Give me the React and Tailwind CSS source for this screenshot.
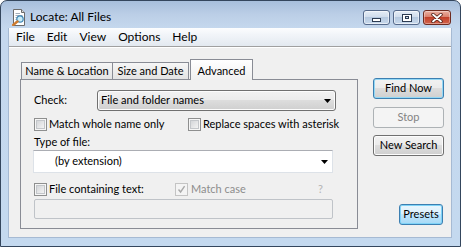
import React from "react";

function Box({ disabled }) {
  if (disabled) {
    return (
      <span className="flex h-[13px] w-[13px] shrink-0 items-center justify-center border border-[#c4c4c4] bg-[#f4f4f4]">
        <svg width="9" height="9" viewBox="0 0 9 9">
          <path d="M1.5 4.5 L3.6 7 L7.6 1.2" fill="none" stroke="#a9a9a9" strokeWidth="1.4" />
        </svg>
      </span>
    );
  }
  return (
    <span className="flex h-[13px] w-[13px] shrink-0 items-center justify-center border border-[#8e8f8f] bg-[#f6f6f6]">
      <span className="h-[9px] w-[9px] border border-[#c3c6ca] bg-[linear-gradient(135deg,#d4d6d9,#f3f3f3)]" />
    </span>
  );
}

function Arrow() {
  return (
    <svg width="7" height="4" viewBox="0 0 7 4">
      <path d="M0 0H7L3.5 4Z" fill="#000" />
    </svg>
  );
}

function WinIcon() {
  return (
    <svg width="16" height="17" viewBox="0 0 16 17">
      <path d="M2.5 0.5H10.5L13.5 3.5V16.5H2.5Z" fill="#fff" stroke="#6b6b6b" />
      <path d="M10.5 0.5V3.5H13.5" fill="#dcdcdc" stroke="#6b6b6b" />
      <path d="M4.5 4.5H9M4.5 6.5H11.5M4.5 8.5H11.5M4.5 10.5H11.5M4.5 12.5H11.5" stroke="#a3adb8" />
      <circle cx="9" cy="10" r="3.2" fill="#c9ecf7" stroke="#3f86b5" strokeWidth="1.2" />
      <path d="M6.6 12.4L2.2 16" stroke="#cf7a2c" strokeWidth="2.4" strokeLinecap="round" />
    </svg>
  );
}

export default function App() {
  return (
    <div className="h-[247px] w-[461px] bg-white font-['Lato','Noto_Sans',sans-serif] text-black">
      <div className="flex h-[247px] w-[461px] flex-col rounded-t-[7px] border border-[#34465d] bg-[linear-gradient(180deg,#a7bfdc_0px,#bccfe7_14px,#c5d8ee_28px,#c4d9ef_100%)] pb-[8px] pl-[7px] pr-[8px]">
        {/* Title bar */}
        <div className="flex h-[27px] items-start">
          <div className="ml-[3px] mt-[8px]">
            <WinIcon />
          </div>
          <span className="ml-[3px] mt-[8px] text-[12px] leading-[16px]">Locate: All Files</span>
          <div className="ml-auto mr-[1px] mt-[9px] flex gap-[3px]">
            <div className="flex h-[15px] w-[27px] items-end justify-center rounded-[3px] border border-[#55698a] bg-[linear-gradient(180deg,#e4ecf6_0%,#cfdcec_50%,#b6c9e0_50%,#c8d9ec_100%)] shadow-[inset_0_0_0_1px_rgba(255,255,255,0.55)]">
              <span className="mb-[2px] h-[4px] w-[9px] border border-[#2c3b52] bg-white" />
            </div>
            <div className="flex h-[15px] w-[27px] items-center justify-center rounded-[3px] border border-[#55698a] bg-[linear-gradient(180deg,#e4ecf6_0%,#cfdcec_50%,#b6c9e0_50%,#c8d9ec_100%)] shadow-[inset_0_0_0_1px_rgba(255,255,255,0.55)]">
              <span className="flex h-[8px] w-[10px] items-center justify-center border border-[#2c3b52] bg-white">
                <span className="h-[3px] w-[4px] border border-[#2c3b52] bg-[#c9d7e8]" />
              </span>
            </div>
            <div className="flex h-[15px] w-[28px] items-center justify-center rounded-[3px] border border-[#6e2b20] bg-[linear-gradient(180deg,#eab0a2_0%,#d97c68_50%,#c2412b_50%,#d3644c_100%)] shadow-[inset_0_0_0_1px_rgba(255,255,255,0.35)]">
              <svg width="12" height="10" viewBox="0 0 12 10">
                <path d="M2 1.5L10 8.5M10 1.5L2 8.5" stroke="#4a1a12" strokeWidth="3.4" strokeLinecap="round" />
                <path d="M2 1.5L10 8.5M10 1.5L2 8.5" stroke="#fff" strokeWidth="1.8" strokeLinecap="round" />
              </svg>
            </div>
          </div>
        </div>

        {/* Client area */}
        <div className="flex flex-1 flex-col border-x border-b border-[#a6bad3] bg-[#f0f0f0]">
          {/* Menu bar */}
          <div className="flex h-[18px] items-center bg-[linear-gradient(180deg,#fcfdfe_0%,#f2f5f9_35%,#e3e9f0_100%)] pl-[1px] text-[12px]">
            <span className="px-[6px]">File</span>
            <span className="px-[6px]">Edit</span>
            <span className="px-[6px]">View</span>
            <span className="px-[6px]">Options</span>
            <span className="px-[6px]">Help</span>
          </div>
          <div className="h-[1px] bg-[#a0a0a0]" />
          <div className="h-[1px] bg-[#ffffff]" />

          {/* Body */}
          <div className="flex flex-1 pl-[11px] pr-[7px] text-[11px]">
            <div className="flex flex-col pt-[11px]">
              {/* Tabs */}
              <div className="flex h-[20px] items-end pl-[1px]">
                <div className="flex h-[17px] w-[92px] items-center justify-center border-x border-t border-[#898c95] bg-[linear-gradient(180deg,#f6f6f6,#e3e3e3)]">
                  Name &amp; Location
                </div>
                <div className="-ml-px flex h-[17px] w-[77px] items-center justify-center border-x border-t border-[#898c95] bg-[linear-gradient(180deg,#f6f6f6,#e3e3e3)]">
                  Size and Date
                </div>
                <div className="relative z-10 -mb-px ml-[1px] flex h-[21px] w-[63px] items-start justify-center border-x border-t border-[#898c95] bg-[linear-gradient(180deg,#ffffff,#f0f0f0)] pt-[3px]">
                  Advanced
                </div>
              </div>
              {/* Panel */}
              <div className="flex h-[150px] w-[338px] flex-col border border-[#898c95] bg-[#f0f0f0] pl-[13px]">
                <div className="mt-[10px] flex h-[21px] items-center">
                  <span className="w-[63px]">Check:</span>
                  <div className="flex h-[21px] w-[239px] items-center justify-between rounded-[3px] border border-[#707070] bg-[linear-gradient(180deg,#f2f2f2_0%,#ebebeb_50%,#dddddd_50%,#cfcfcf_100%)] pl-[3px] pr-[4px] shadow-[inset_0_0_0_1px_#fcfcfc]">
                    <span>File and folder names</span>
                    <Arrow />
                  </div>
                </div>

                <div className="mt-[7px] flex h-[13px] items-center">
                  <div className="flex w-[154px] items-center gap-[2px]">
                    <Box />
                    <span>Match whole name only</span>
                  </div>
                  <div className="flex items-center gap-[2px]">
                    <Box />
                    <span>Replace spaces with asterisk</span>
                  </div>
                </div>

                <div className="mt-[3px] h-[15px] leading-[15px]">Type of file:</div>

                <div className="-ml-px mt-[1px] flex h-[23px] w-[300px] items-center justify-between border border-[#dde2e8] border-t-[#abadb3] bg-white pl-[21px] pr-[4px]">
                  <span>(by extension)</span>
                  <Arrow />
                </div>

                <div className="mt-[10px] flex h-[13px] w-[299px] items-center">
                  <div className="flex w-[141px] items-center gap-[2px]">
                    <Box />
                    <span>File containing text:</span>
                  </div>
                  <div className="flex items-center gap-[3px] text-[#8d8d8d]">
                    <Box disabled />
                    <span>Match case</span>
                  </div>
                  <span className="ml-auto mr-[10px] text-[#b4b4b4]">?</span>
                </div>

                <div className="mt-[3px] h-[20px] w-[299px] rounded-[2px] border border-[#bfc3c8] bg-[#f0f0f0]" />
              </div>
            </div>

            {/* Buttons */}
            <div className="ml-[15px] flex w-[71px] flex-col pb-[12px] pt-[30px]">
              <div className="flex h-[21px] items-center justify-center rounded-[3px] border border-[#3c7fb1] bg-[linear-gradient(180deg,#f2f2f2_0%,#ebebeb_50%,#dddddd_50%,#cfcfcf_100%)] shadow-[inset_0_0_0_1px_#93d8f5]">
                Find Now
              </div>
              <div className="mt-[8px] flex h-[21px] items-center justify-center rounded-[3px] border border-[#adb2b5] bg-[#f4f4f4] text-[#838383]">
                Stop
              </div>
              <div className="mt-[7px] flex h-[21px] items-center justify-center rounded-[3px] border border-[#707070] bg-[linear-gradient(180deg,#f2f2f2_0%,#ebebeb_50%,#dddddd_50%,#cfcfcf_100%)] shadow-[inset_0_0_0_1px_#fcfcfc]">
                New Search
              </div>
              <div className="mr-[1px] mt-auto flex h-[21px] w-[44px] items-center justify-center self-end rounded-[3px] border border-[#3c7fb1] bg-[linear-gradient(180deg,#eaf6fd_0%,#d9f0fc_50%,#bee6fd_50%,#a7d9f5_100%)] shadow-[inset_0_0_0_1px_#7fd3f7]">
                Presets
              </div>
            </div>
          </div>
        </div>
      </div>
    </div>
  );
}
